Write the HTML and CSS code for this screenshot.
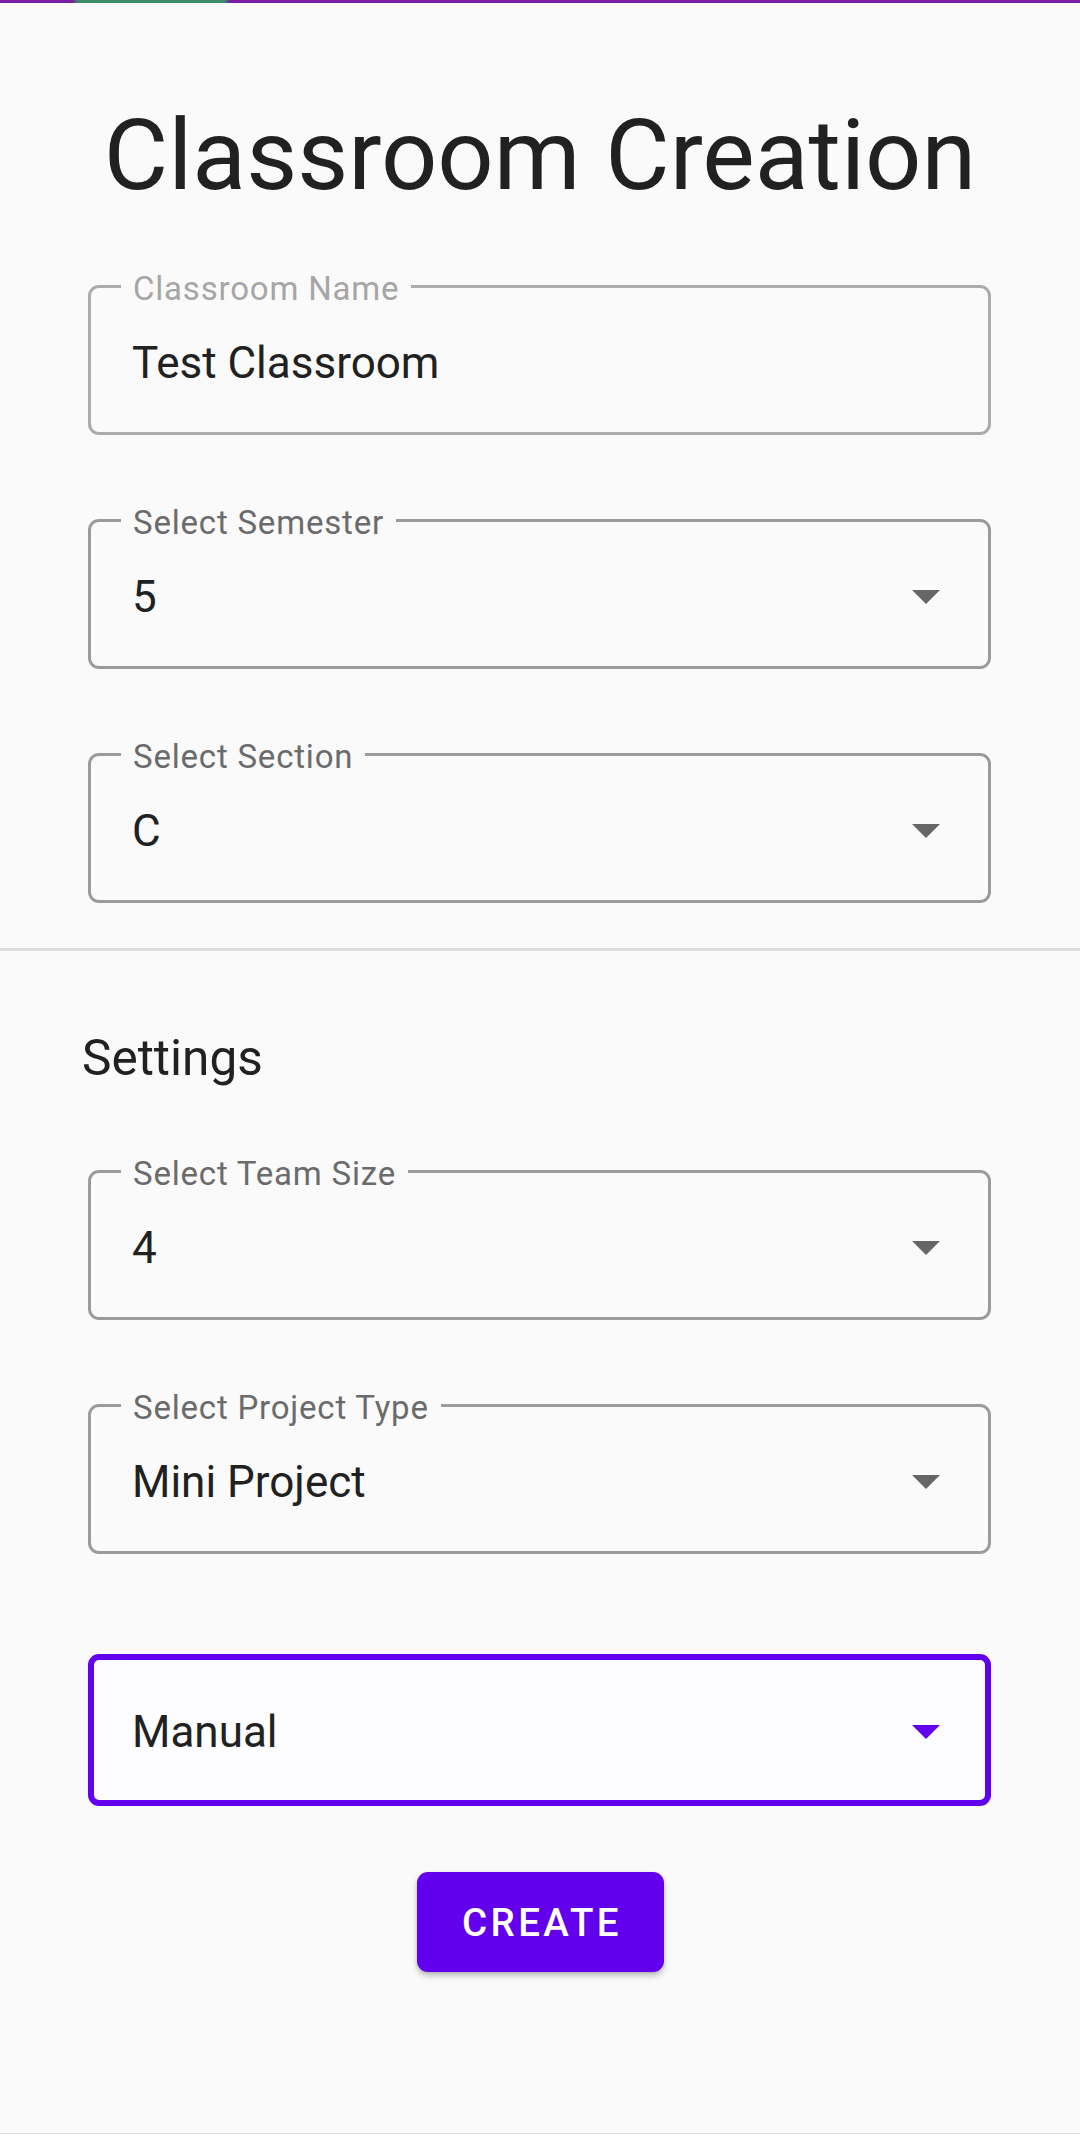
FILE: index.html
```html
<!DOCTYPE html>
<html lang="en">
<head>
<meta charset="utf-8">
<title>Classroom Creation</title>
<link rel="stylesheet" href="styles.css">
</head>
<body>
<div class="status-strip"><div class="status-glow"></div></div>
<main class="screen">
  <h1 class="title">Classroom Creation</h1>
  <div class="form">
    <div class="field field-text field-first">
      <span class="field-label label-muted">Classroom Name</span>
      <span class="field-value">Test Classroom</span>
    </div>
    <div class="field field-select">
      <span class="field-label">Select Semester</span>
      <span class="field-value">5</span>
      <svg class="arrow" width="28" height="14" viewBox="0 0 28 14"><path d="M0 0h28L14 14z"/></svg>
    </div>
    <div class="field field-select">
      <span class="field-label">Select Section</span>
      <span class="field-value">C</span>
      <svg class="arrow" width="28" height="14" viewBox="0 0 28 14"><path d="M0 0h28L14 14z"/></svg>
    </div>
  </div>
  <hr class="divider">
  <h2 class="section-title">Settings</h2>
  <div class="form">
    <div class="field field-select field-first-settings">
      <span class="field-label">Select Team Size</span>
      <span class="field-value">4</span>
      <svg class="arrow" width="28" height="14" viewBox="0 0 28 14"><path d="M0 0h28L14 14z"/></svg>
    </div>
    <div class="field field-select">
      <span class="field-label">Select Project Type</span>
      <span class="field-value">Mini Project</span>
      <svg class="arrow" width="28" height="14" viewBox="0 0 28 14"><path d="M0 0h28L14 14z"/></svg>
    </div>
    <div class="field field-select field-focused">
      <span class="field-value">Manual</span>
      <svg class="arrow arrow-focused" width="28" height="14" viewBox="0 0 28 14"><path d="M0 0h28L14 14z"/></svg>
    </div>
  </div>
  <div class="actions">
    <button class="btn-create" type="button">CREATE</button>
  </div>
</main>
<div class="nav-strip"></div>
</body>
</html>
```
FILE: styles.css
```css
* { box-sizing: border-box; }

html, body {
  margin: 0;
  padding: 0;
}

body {
  min-height: 100vh;
  display: flex;
  flex-direction: column;
  background: #fafafa;
  font-family: Roboto, "Noto Sans", "Liberation Sans", sans-serif;
  color: #212121;
}

.status-strip {
  height: 3px;
  background: #7b1fa2;
  display: flex;
}

.status-glow {
  margin-left: 72px;
  width: 158px;
  height: 3px;
  background: linear-gradient(90deg, rgba(61,140,108,0) 0, #3d8c6c 6px, #3d8c6c 152px, rgba(61,140,108,0) 158px);
}

.screen {
  flex: 1;
  display: flex;
  flex-direction: column;
}

.title {
  margin: 94px 0 0;
  text-align: center;
  font-size: 99px;
  line-height: 116px;
  font-weight: 400;
  color: #212121;
}

.form {
  display: flex;
  flex-direction: column;
  padding: 0 89px 0 88px;
}

.field {
  position: relative;
  height: 150px;
  margin-top: 84px;
  border: 3px solid #9b9b9b;
  border-radius: 11px;
  display: flex;
  align-items: center;
  padding: 6px 48px 0 41px;
}

.field-first {
  margin-top: 72px;
}

.field-first-settings {
  margin-top: 83px;
}

.field-text {
  border-color: #ababab;
}

.field-label {
  position: absolute;
  top: -19px;
  left: 30px;
  padding: 0 12px;
  background: #fafafa;
  font-size: 33px;
  line-height: 39px;
  letter-spacing: 0.8px;
  color: #6b6b6b;
  white-space: nowrap;
}

.label-muted {
  color: #a6a6a6;
}

.field-value {
  flex: 1;
  font-size: 44px;
  line-height: 52px;
  color: #212121;
  white-space: nowrap;
}

.arrow {
  flex: none;
  fill: #666666;
}

.field-focused {
  margin-top: 100px;
  height: 152px;
  border: 6px solid #6200ee;
  padding: 4px 45px 0 38px;
  background: #fdfcff;
}

.arrow-focused {
  fill: #6200ee;
}

.divider {
  margin: 45px 0 0;
  border: 0;
  height: 3px;
  background: #dcdcdc;
}

.section-title {
  margin: 78px 0 0 82px;
  font-size: 49.5px;
  line-height: 58px;
  font-weight: 400;
  color: #212121;
}

.actions {
  display: flex;
  justify-content: center;
  margin-top: 66px;
}

.btn-create {
  height: 100px;
  width: 247px;
  margin-left: 1px;
  border: 0;
  border-radius: 11px;
  background: #6200ee;
  color: #ffffff;
  font-family: Roboto, "Noto Sans", "Liberation Sans", sans-serif;
  font-size: 38.5px;
  font-weight: 500;
  letter-spacing: 3.4px;
  box-shadow: 0 4px 6px rgba(0,0,0,0.22), 0 1px 3px rgba(0,0,0,0.12);
  padding: 0 0 0 3px;
}

.nav-strip {
  height: 6px;
  background: #ffffff;
  border-top: 1px solid #dedede;
  margin-top: auto;
}
```
